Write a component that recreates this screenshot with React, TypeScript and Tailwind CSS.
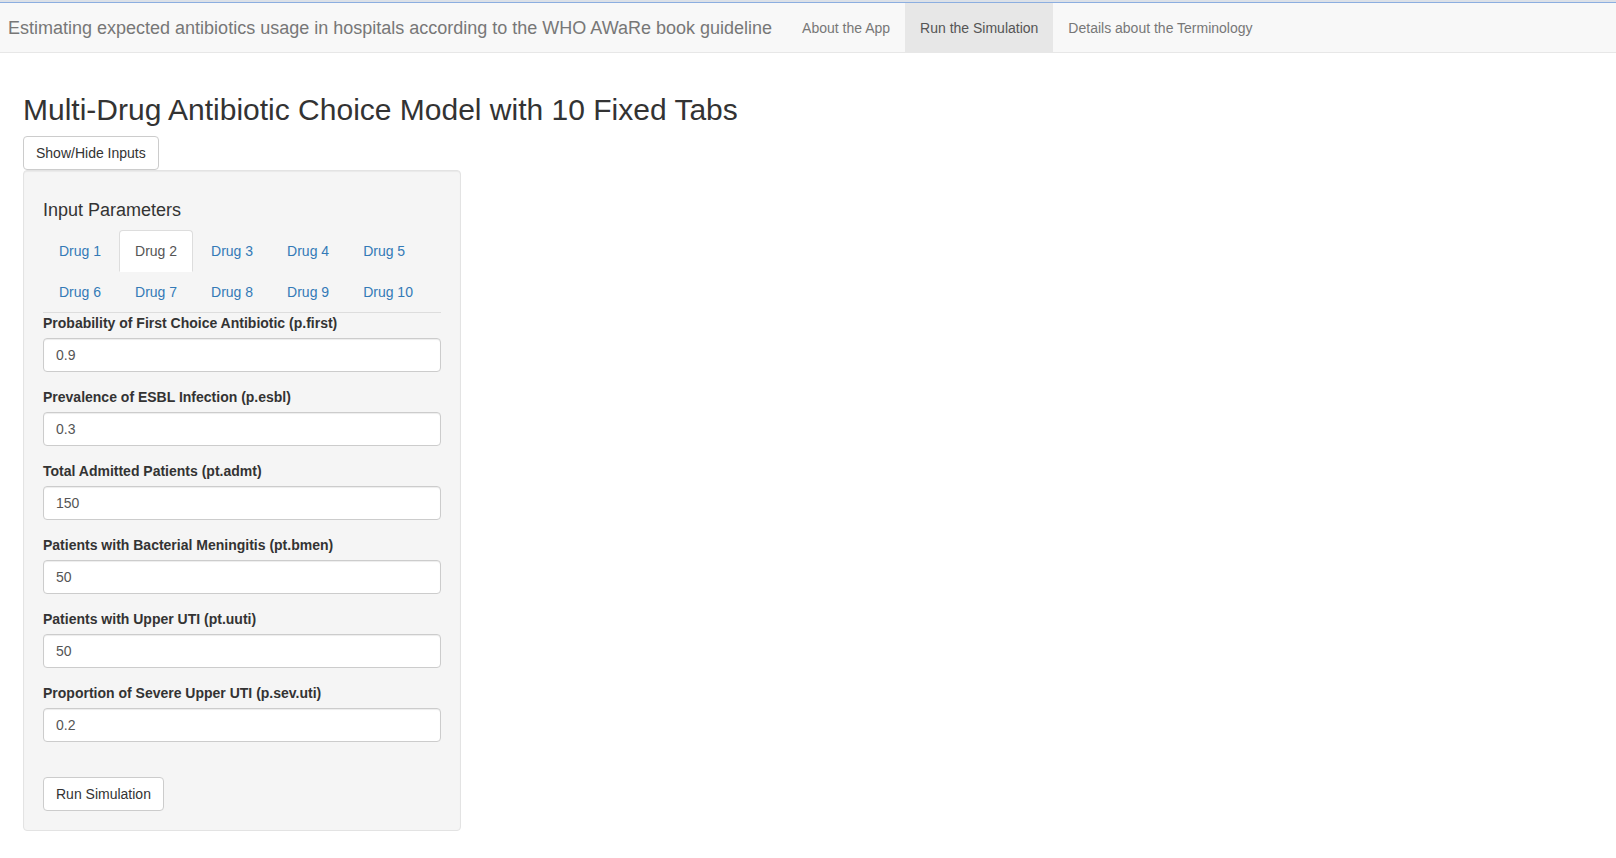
import { useState } from 'react';

const NAV_ITEMS = ['About the App', 'Run the Simulation', 'Details about the Terminology'];

const DRUG_TABS = Array.from({ length: 10 }, (_, i) => `Drug ${i + 1}`);

const PARAMS = [
  { label: 'Probability of First Choice Antibiotic (p.first)', value: '0.9' },
  { label: 'Prevalence of ESBL Infection (p.esbl)', value: '0.3' },
  { label: 'Total Admitted Patients (pt.admt)', value: '150' },
  { label: 'Patients with Bacterial Meningitis (pt.bmen)', value: '50' },
  { label: 'Patients with Upper UTI (pt.uuti)', value: '50' },
  { label: 'Proportion of Severe Upper UTI (p.sev.uti)', value: '0.2' },
];

function Navbar() {
  return (
    <div>
      {/* thin top rule */}
      <div className="h-[2px] bg-[#dce1e8]" />
      <nav className="flex items-stretch h-[51px] border-t border-t-[#8caee0] border-b border-b-[#e7e7e7] bg-[#f8f8f8]">
        <div className="pl-[8px] pr-[15px] flex items-center text-[18px] leading-[20px] text-[#777] whitespace-nowrap">
          Estimating expected antibiotics usage in hospitals according to the WHO AWaRe book guideline
        </div>
        <ul className="flex">
          {NAV_ITEMS.map((item) => {
            const active = item === 'Run the Simulation';
            return (
              <li
                key={item}
                className={`px-[15px] flex items-center text-[14px] leading-[20px] whitespace-nowrap ${
                  active ? 'bg-[#e7e7e7] text-[#555]' : 'text-[#777]'
                }`}
              >
                {item}
              </li>
            );
          })}
        </ul>
      </nav>
    </div>
  );
}

function DrugTabs() {
  const [active, setActive] = useState('Drug 2');
  return (
    <ul className="flex flex-wrap border-b border-[#ddd]">
      {DRUG_TABS.map((tab) => {
        const isActive = tab === active;
        return (
          <li key={tab} className="-mb-px mr-[2px]">
            <button
              type="button"
              onClick={() => setActive(tab)}
              className={`block px-[15px] py-[10px] text-[14px] leading-[20px] rounded-t-[4px] border ${
                isActive
                  ? 'bg-white text-[#555] border-[#ddd] border-b-transparent'
                  : 'text-[#337ab7] border-transparent'
              }`}
            >
              {tab}
            </button>
          </li>
        );
      })}
    </ul>
  );
}

export default function App() {
  const [showInputs, setShowInputs] = useState(true);

  return (
    <div className="min-h-screen bg-white font-['Liberation_Sans',Arial,sans-serif] text-[14px] leading-[20px] text-[#333]">
      <Navbar />

      <div className="px-[23px] pt-[40px]">
        <h2 className="text-[30px] leading-[33px] mb-[10px] whitespace-nowrap">
          Multi-Drug Antibiotic Choice Model with 10 Fixed Tabs
        </h2>

        <button
          type="button"
          onClick={() => setShowInputs((v) => !v)}
          className="h-[34px] px-[12px] border border-[#ccc] rounded-[4px] bg-white text-[#333] text-[14px]"
        >
          Show/Hide Inputs
        </button>

        {showInputs && (
          <div className="w-[438px] p-[19px] bg-[#f5f5f5] border border-[#e3e3e3] rounded-[4px] shadow-[inset_0_1px_1px_rgba(0,0,0,0.05)]">
            <h4 className="text-[18px] leading-[20px] mt-[10px] mb-[10px]">Input Parameters</h4>

            <DrugTabs />

            <div>
              {PARAMS.map((p) => (
                <div key={p.label} className="mb-[15px]">
                  <label className="inline-block mb-[5px] font-bold">{p.label}</label>
                  <input
                    type="text"
                    defaultValue={p.value}
                    className="block w-full h-[34px] px-[12px] text-[14px] text-[#555] bg-white border border-[#ccc] rounded-[4px] shadow-[inset_0_1px_1px_rgba(0,0,0,0.075)] outline-none"
                  />
                </div>
              ))}
            </div>

            <button
              type="button"
              className="mt-[20px] h-[34px] px-[12px] border border-[#ccc] rounded-[4px] bg-white text-[#333] text-[14px]"
            >
              Run Simulation
            </button>
          </div>
        )}
      </div>
    </div>
  );
}
